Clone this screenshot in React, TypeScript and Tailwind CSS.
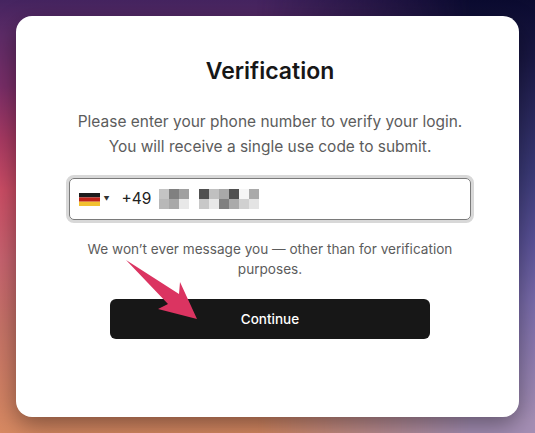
const ROW_ONE = ["#c4c4c4", "#808080", "#a0a0a0"];
const ROW_TWO = ["#b8b8b8", "#a8a8a8", "#e8e8e8"];
const ROW_THREE = ["#505050", "#c0c0c0", "#a8a8a8", "#505050", "#f5f5f5", "#aaaaaa"];
const ROW_FOUR = ["#c8c8c8", "#e8e8e8", "#808080", "#aaaaaa", "#d0d0d0", "#e4e4e4"];

function Mosaic({ cells, cols }: { cells: string[]; cols: string }) {
  return (
    <div className={`grid ${cols} auto-rows-[10px]`}>
      {cells.map((c, i) => (
        <div key={i} style={{ backgroundColor: c }} />
      ))}
    </div>
  );
}

export default function App() {
  return (
    <div className="relative h-[433px] w-[535px] overflow-hidden p-4 font-['Inter',sans-serif] bg-[linear-gradient(180deg,#452460_0%,#5e2c68_8%,#7a2e68_20%,#a83a63_32%,#cd4e66_44%,#c96470_60%,#c87468_76%,#d88a62_100%)]">
      <div className="absolute inset-0 bg-[linear-gradient(180deg,#0b0b30_0%,#1a1845_14%,#3b3a78_40%,#5a5298_56%,#7a6cab_70%,#a58fb5_97%)] [mask-image:linear-gradient(90deg,transparent_48%,black_88%)]" />
      <div className="relative flex h-[401px] w-[503px] flex-col items-center rounded-[16px] bg-white pl-[5px] pt-[40px] shadow-[0_8px_24px_rgba(0,0,0,0.4)]">
        <h1 className="text-[23px] font-semibold leading-[30px] text-[#171717]">Verification</h1>
        <p className="mt-[23px] text-center text-[15.47px] leading-[25px] text-[#5c5c5c]">
          Please enter your phone number to verify your login.
          <br />
          You will receive a single use code to submit.
        </p>
        <div className="mt-[16px] flex h-[48px] w-[408px] items-center rounded-[8px] border-[3px] border-[#d8d8d8] bg-white">
          <div className="flex h-[42px] w-full items-center rounded-[5px] border border-[#7a7a7a] pl-[8.5px]">
            <svg width="21" height="13" viewBox="0 0 21 13" className="shrink-0">
              <rect width="21" height="4.4" fill="#1c1c1c" />
              <rect y="4.4" width="21" height="4.3" fill="#c0231a" />
              <rect y="8.7" width="21" height="4.3" fill="#f2c230" />
            </svg>
            <span className="ml-[4px] text-[6px] leading-none text-[#333]">▼</span>
            <span className="ml-[12px] text-[15.5px] text-[#222]">+49</span>
            <div className="ml-[7.5px] w-[30px]">
              <Mosaic cells={[...ROW_ONE, ...ROW_TWO]} cols="grid-cols-3" />
            </div>
            <div className="ml-[10px] w-[60px]">
              <Mosaic cells={[...ROW_THREE, ...ROW_FOUR]} cols="grid-cols-6" />
            </div>
          </div>
        </div>
        <p className="mt-[16px] w-[400px] text-center text-[13.6px] leading-[20px] text-[#5c5c5c]">
          We won’t ever message you — other than for verification purposes.
        </p>
        <button className="mt-[20px] flex h-[40px] w-[320px] items-center justify-center rounded-[6px] bg-[#171717] text-[13.5px] font-[450] text-white">
          Continue
        </button>
      </div>
      <svg width="100" height="70" viewBox="0 0 100 70" className="absolute left-[120px] top-[255px]">
        <path d="M6 5 L59 39 L60 27 L77 64 L38 54 L48 49 Z" fill="#db3461" />
      </svg>
    </div>
  );
}
